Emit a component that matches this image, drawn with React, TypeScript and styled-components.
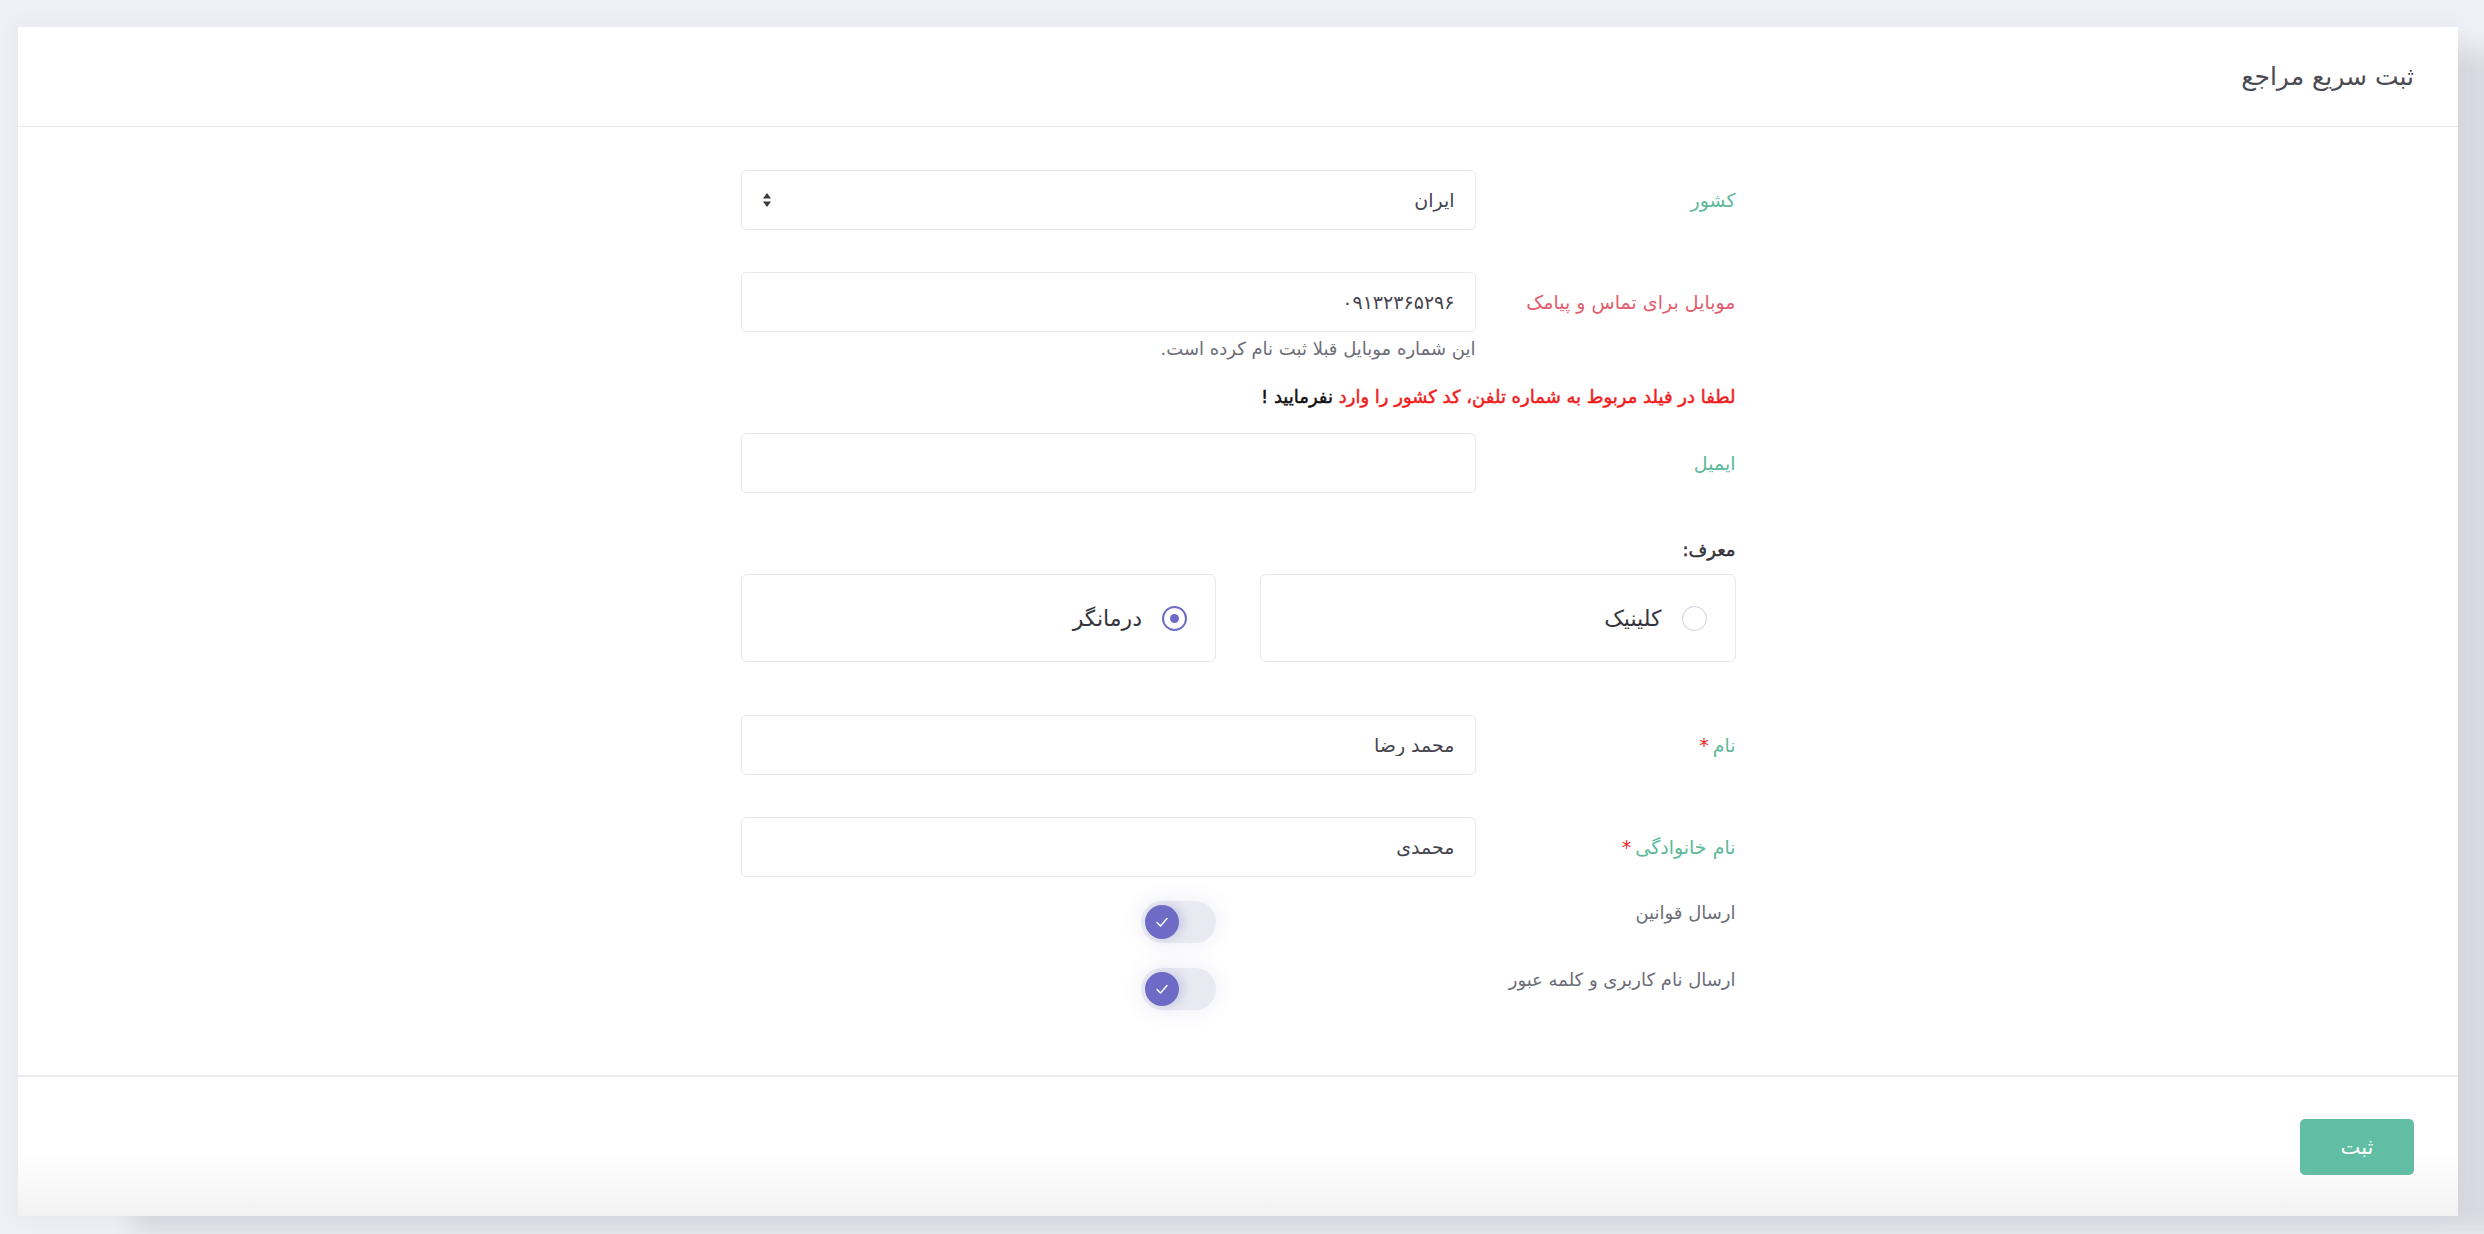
import React from 'react';
import styled, { createGlobalStyle } from 'styled-components';

const GlobalStyle = createGlobalStyle`
  html, body {
    margin: 0;
    padding: 0;
    background: #eff0f5;
    font-family: "DejaVu Sans", "Noto Sans", sans-serif;
  }
  * {
    box-sizing: border-box;
  }
`;

const colors = {
  green: '#5cb99a',
  red: '#e25d6d',
  alert: '#f01d1d',
  text: '#45454f',
  muted: '#6d6d78',
  border: '#e7e7ee',
  purple: '#6d6bc5',
};

const Page = styled.div`
  min-height: 1234px;
  padding: 27px 26px 18px 18px;
`;

const Card = styled.div`
  direction: rtl;
  background: #fff;
  box-shadow: 110px 20px 22px -4px rgba(30, 30, 50, 0.1),
    0 0 24px rgba(60, 60, 100, 0.05);
`;

const Header = styled.div`
  height: 100px;
  display: flex;
  align-items: center;
  padding: 0 44px;
  border-bottom: 1px solid #e8e8ee;
`;

const Title = styled.h1`
  margin: 0;
  font-size: 25px;
  font-weight: 400;
  color: #4a4a53;
`;

const Body = styled.div`
  padding: 43px 0 65px;
  display: flex;
  justify-content: center;
`;

const Form = styled.div`
  width: 995px;
`;

interface SpacedProps {
  $mb?: number;
}

const Row = styled.div<SpacedProps>`
  display: grid;
  grid-template-columns: 260px 735px;
  align-items: center;
  margin-bottom: ${(p) => p.$mb ?? 42}px;
`;

interface LabelProps {
  $tone?: 'green' | 'red' | 'dark';
}

const Label = styled.label<LabelProps>`
  font-size: 19px;
  color: ${(p) =>
    p.$tone === 'red' ? colors.red : p.$tone === 'dark' ? colors.text : colors.green};
`;

const Star = styled.span`
  color: ${colors.alert};
  margin-right: 4px;
`;

const Input = styled.input`
  width: 100%;
  height: 60px;
  border: 1px solid ${colors.border};
  border-radius: 5px;
  padding: 0 20px;
  font-family: inherit;
  font-size: 19px;
  color: ${colors.text};
  background: #fff;
  direction: rtl;
  outline: none;
`;

const Select = styled.div`
  height: 60px;
  border: 1px solid ${colors.border};
  border-radius: 5px;
  padding: 0 20px;
  display: flex;
  align-items: center;
  justify-content: space-between;
  font-size: 19px;
  color: ${colors.text};
`;

const HelpText = styled.div`
  grid-column: 2;
  font-size: 18px;
  color: ${colors.muted};
  line-height: 24px;
  margin-top: 5px;
`;

const Warning = styled.div<SpacedProps>`
  font-size: 18px;
  line-height: 24px;
  color: ${colors.alert};
  -webkit-text-stroke: 0.5px currentColor;
  margin-top: 24px;
  margin-bottom: ${(p) => p.$mb ?? 0}px;

  b {
    font-weight: 400;
    color: #111;
  }
`;

const SectionTitle = styled.div`
  font-size: 18px;
  color: #33333b;
  -webkit-text-stroke: 0.5px currentColor;
  line-height: 24px;
  margin-bottom: 12px;
`;

const Choices = styled.div<SpacedProps>`
  display: grid;
  grid-template-columns: 1fr 1fr;
  gap: 44px;
  margin-bottom: ${(p) => p.$mb ?? 0}px;
`;

const ChoiceCard = styled.div`
  height: 88px;
  border: 1px solid ${colors.border};
  border-radius: 6px;
  display: flex;
  align-items: center;
  gap: 20px;
  padding: 0 28px;
  font-size: 22px;
  color: #35353d;
`;

interface RadioProps {
  $checked?: boolean;
}

const Radio = styled.span<RadioProps>`
  width: 25px;
  height: 25px;
  border-radius: 50%;
  flex-shrink: 0;
  border: ${(p) => (p.$checked ? `2px solid ${colors.purple}` : '1.5px solid #cdcce0')};
  display: flex;
  align-items: center;
  justify-content: center;

  &::after {
    content: '';
    width: 9px;
    height: 9px;
    border-radius: 50%;
    background: ${colors.purple};
    display: ${(p) => (p.$checked ? 'block' : 'none')};
  }
`;

const ToggleRow = styled.div<SpacedProps>`
  display: grid;
  grid-template-columns: 1fr 1fr;
  gap: 44px;
  align-items: start;
  margin-bottom: ${(p) => p.$mb ?? 0}px;
`;

const ToggleLabel = styled.div`
  font-size: 18px;
  color: ${colors.muted};
  line-height: 24px;
`;

const Track = styled.div`
  width: 75px;
  height: 42px;
  border-radius: 21px;
  background: #e8e9f1;
  padding: 4px;
  display: flex;
  justify-content: flex-end;
  box-shadow: 0 0 22px rgba(109, 107, 197, 0.12);
`;

const Knob = styled.div`
  width: 34px;
  height: 34px;
  border-radius: 50%;
  background: ${colors.purple};
  display: flex;
  align-items: center;
  justify-content: center;
  box-shadow: 4px 0 10px rgba(109, 107, 197, 0.25);
`;

const Footer = styled.div`
  border-top: 2px solid #ebebef;
  height: 141px;
  display: flex;
  align-items: center;
  padding: 0 44px;
  background: linear-gradient(to bottom, #fff 55%, #f2f2f3 100%);
`;

const SubmitButton = styled.button`
  width: 114px;
  height: 56px;
  border: none;
  border-radius: 5px;
  background: #61bda3;
  color: #fff;
  font-family: inherit;
  font-size: 21px;
  cursor: pointer;
`;

const SortIcon = () => (
  <svg width="10" height="16" viewBox="0 0 10 16">
    <path d="M5 1 L9 6.5 H1 Z" fill="#3a3a42" />
    <path d="M5 15 L9 9.5 H1 Z" fill="#3a3a42" />
  </svg>
);

const Toggle = () => (
  <Track>
    <Knob>
      <svg width="16" height="16" viewBox="0 0 16 16">
        <path
          d="M3 8.5 L6.5 12 L13 4.5"
          fill="none"
          stroke="#fff"
          strokeWidth="1.4"
          strokeLinecap="round"
          strokeLinejoin="round"
        />
      </svg>
    </Knob>
  </Track>
);

export default function App() {
  return (
    <>
      <GlobalStyle />
      <Page>
        <Card>
          <Header>
            <Title>ثبت سریع مراجع</Title>
          </Header>
          <Body>
            <Form>
              <Row>
                <Label>کشور</Label>
                <Select>
                  <span>ایران</span>
                  <SortIcon />
                </Select>
              </Row>

              <Row $mb={0}>
                <Label $tone="red">موبایل برای تماس و پیامک</Label>
                <Input defaultValue="۰۹۱۳۲۳۶۵۲۹۶" />
                <HelpText>این شماره موبایل قبلا ثبت نام کرده است.</HelpText>
              </Row>

              <Warning $mb={24}>
                لطفا در فیلد مربوط به شماره تلفن، کد کشور را وارد <b>نفرمایید !</b>
              </Warning>

              <Row $mb={45}>
                <Label>ایمیل</Label>
                <Input defaultValue="" />
              </Row>

              <SectionTitle>معرف:</SectionTitle>
              <Choices $mb={53}>
                <ChoiceCard>
                  <Radio />
                  <span>کلینیک</span>
                </ChoiceCard>
                <ChoiceCard>
                  <Radio $checked />
                  <span>درمانگر</span>
                </ChoiceCard>
              </Choices>

              <Row>
                <Label>
                  نام<Star>*</Star>
                </Label>
                <Input defaultValue="محمد رضا" />
              </Row>

              <Row $mb={24}>
                <Label>
                  نام خانوادگی<Star>*</Star>
                </Label>
                <Input defaultValue="محمدی" />
              </Row>

              <ToggleRow $mb={25}>
                <ToggleLabel>ارسال قوانین</ToggleLabel>
                <Toggle />
              </ToggleRow>

              <ToggleRow>
                <ToggleLabel>ارسال نام کاربری و کلمه عبور</ToggleLabel>
                <Toggle />
              </ToggleRow>
            </Form>
          </Body>
          <Footer>
            <SubmitButton>ثبت</SubmitButton>
          </Footer>
        </Card>
      </Page>
    </>
  );
}
